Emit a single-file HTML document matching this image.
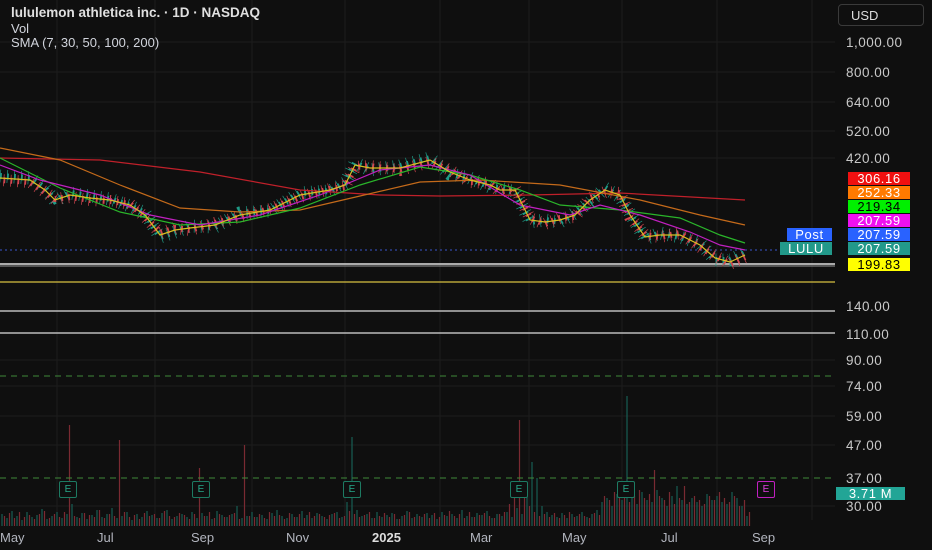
<!DOCTYPE html>
<html><head><meta charset="utf-8"><style>
body{margin:0;width:932px;height:550px;background:#0f0f0f;overflow:hidden;font-family:"Liberation Sans",sans-serif;position:relative}
.t{position:absolute;color:#d1d4dc;font-size:13px;line-height:14px}
.ax{position:absolute;left:846px;color:#c8c8c8;font-size:13.5px;letter-spacing:.5px}
.lb{position:absolute;left:848px;width:62px;height:13px;font-size:13px;line-height:13px;text-align:center;letter-spacing:.6px;color:#fff}
.m{position:absolute;top:530px;color:#b2b5be;font-size:13px}
.e{position:absolute;top:481px;width:16px;height:15px;border:1.5px solid #1d7a62;color:#26a98a;font-size:10px;text-align:center;line-height:15px;border-radius:2px;background:#0f0f0f}
</style></head><body>
<svg width="932" height="550" style="position:absolute;left:0;top:0">
<g stroke="#1c1c1c" stroke-width="1">
<line x1="57" y1="0" x2="57" y2="520"/><line x1="155" y1="0" x2="155" y2="520"/><line x1="252" y1="0" x2="252" y2="520"/><line x1="345" y1="0" x2="345" y2="520"/><line x1="440" y1="0" x2="440" y2="520"/><line x1="529" y1="0" x2="529" y2="520"/><line x1="622" y1="0" x2="622" y2="520"/><line x1="717" y1="0" x2="717" y2="520"/><line x1="812" y1="0" x2="812" y2="520"/>
<line x1="0" y1="42" x2="835" y2="42"/><line x1="0" y1="72" x2="835" y2="72"/><line x1="0" y1="102" x2="835" y2="102"/><line x1="0" y1="131" x2="835" y2="131"/><line x1="0" y1="158" x2="835" y2="158"/><line x1="0" y1="360" x2="835" y2="360"/><line x1="0" y1="386" x2="835" y2="386"/><line x1="0" y1="416" x2="835" y2="416"/><line x1="0" y1="445" x2="835" y2="445"/><line x1="0" y1="506" x2="835" y2="506"/>
</g>
<path fill="none" stroke="#175e54" stroke-width="1.2" d="M2 526v-12m5 12v-8m5 8v-15m5 15v-10m5 10v-6m5 6v-14m5 14v-9m5 9v-11m5 11v-17m5 17v-7m5 7v-10m5 10v-14m5 14v-8m5 8v-12m5 12v-22m5 22v-9m5 9v-13m5 13v-7m5 7v-11m5 11v-16m5 16v-9m5 9v-12m5 12v-18m5 18v-8m5 8v-10m5 10v-14m5 14v-6m5 6v-12m5 12v-9m5 9v-15m5 15v-11m5 11v-8m5 8v-13m5 13v-16m5 16v-7m5 7v-10m5 10v-12m5 12v-9m5 9v-14m5 14v-8m5 8v-13m5 13v-10m5 10v-7m5 7v-15m5 15v-11m5 11v-9m5 9v-12m5 12v-20m5 20v-8m5 8v-10m5 10v-14m5 14v-9m5 9v-11m5 11v-7m5 7v-13m5 13v-16m5 16v-10m5 10v-8m5 8v-12m5 12v-9m5 9v-15m5 15v-11m5 11v-8m5 8v-13m5 13v-10m5 10v-7m5 7v-12m5 12v-14m5 14v-9m5 9v-24m5 24v-89m5 89v-16m5 16v-10m5 10v-12m5 12v-8m5 8v-14m5 14v-9m5 9v-11m5 11v-13m5 13v-7m5 7v-10m5 10v-15m5 15v-8m5 8v-12m5 12v-9m5 9v-13m5 13v-11m5 11v-7m5 7v-14m5 14v-10m5 10v-12m5 12v-8m5 8v-16m5 16v-10m5 10v-9m5 9v-13m5 13v-11m5 11v-15m5 15v-8m5 8v-12m5 12v-10m5 10v-14m5 14v-9m5 9v-18m5 18v-12m5 12v-30m5 30v-64m5 64v-48m5 48v-20m5 20v-14m5 14v-11m5 11v-9m5 9v-13m5 13v-8m5 8v-12m5 12v-10m5 10v-14m5 14v-9m5 9v-12m5 12v-16m5 16v-24m5 24v-28m5 28v-20m5 20v-32m5 32v-26m5 26v-130m5 130v-30m5 30v-22m5 22v-34m5 34v-26m5 26v-24m5 24v-36m5 36v-28m5 28v-20m5 20v-30m5 30v-40m5 40v-26m5 26v-22m5 22v-28m5 28v-24m5 24v-20m5 20v-32m5 32v-26m5 26v-30m5 30v-24m5 24v-22m5 22v-34m5 34v-28m5 28v-20m5 20v-10"/>
<path fill="none" stroke="#7a2a32" stroke-width="1.2" d="M4.5 526v-10m5 10v-13m5 13v-8m5 8v-14m5 14v-9m5 9v-11m5 11v-7m5 7v-12m5 12v-15m5 15v-8m5 8v-12m5 12v-9m5 9v-14m5 14v-101m5 101v-10m5 10v-8m5 8v-13m5 13v-11m5 11v-9m5 9v-16m5 16v-8m5 8v-12m5 12v-10m5 10v-86m5 86v-14m5 14v-9m5 9v-11m5 11v-7m5 7v-13m5 13v-10m5 10v-12m5 12v-8m5 8v-15m5 15v-10m5 10v-9m5 9v-13m5 13v-11m5 11v-7m5 7v-12m5 12v-58m5 58v-10m5 10v-14m5 14v-8m5 8v-12m5 12v-9m5 9v-11m5 11v-13m5 13v-7m5 7v-81m5 81v-10m5 10v-9m5 9v-12m5 12v-8m5 8v-14m5 14v-10m5 10v-11m5 11v-7m5 7v-13m5 13v-9m5 9v-12m5 12v-8m5 8v-14m5 14v-10m5 10v-12m5 12v-9m5 9v-11m5 11v-13m5 13v-8m5 8v-10m5 10v-15m5 15v-12m5 12v-9m5 9v-11m5 11v-14m5 14v-8m5 8v-10m5 10v-13m5 13v-9m5 9v-12m5 12v-7m5 7v-11m5 11v-14m5 14v-9m5 9v-10m5 10v-12m5 12v-8m5 8v-13m5 13v-9m5 9v-11m5 11v-15m5 15v-10m5 10v-12m5 12v-8m5 8v-14m5 14v-9m5 9v-11m5 11v-13m5 13v-10m5 10v-8m5 8v-12m5 12v-14m5 14v-22m5 22v-30m5 30v-106m5 106v-40m5 40v-20m5 20v-14m5 14v-10m5 10v-12m5 12v-9m5 9v-13m5 13v-8m5 8v-11m5 11v-14m5 14v-9m5 9v-12m5 12v-10m5 10v-8m5 8v-13m5 13v-11m5 11v-30m5 30v-26m5 26v-34m5 34v-28m5 28v-38m5 38v-24m5 24v-30m5 30v-36m5 36v-28m5 28v-32m5 32v-56m5 56v-30m5 30v-26m5 26v-34m5 34v-22m5 22v-28m5 28v-40m5 40v-24m5 24v-30m5 30v-26m5 26v-22m5 22v-30m5 30v-26m5 26v-34m5 34v-28m5 28v-24m5 24v-30m5 30v-20m5 20v-26m5 26v-14"/>
<line x1="0" y1="264" x2="835" y2="264" stroke="#ddd" stroke-width="1.5"/>
<line x1="0" y1="266" x2="835" y2="266" stroke="#999" stroke-width="1"/>
<line x1="0" y1="282" x2="835" y2="282" stroke="#d8c040" stroke-width="1.3"/>
<line x1="0" y1="311" x2="835" y2="311" stroke="#ddd" stroke-width="1.2"/>
<line x1="0" y1="333" x2="835" y2="333" stroke="#ddd" stroke-width="1.2"/>
<line x1="0" y1="376" x2="835" y2="376" stroke="#3f8a3a" stroke-dasharray="6,5"/>
<line x1="0" y1="478" x2="835" y2="478" stroke="#3f8a3a" stroke-dasharray="6,5"/>
<line x1="0" y1="250" x2="780" y2="250" stroke="#3a55cc" stroke-dasharray="2,3"/>
<g fill="none">
<polyline stroke="#1f9a86" stroke-width="13" stroke-dasharray="0.7 6.3" points="0,176 30,178 45,188 55,201 70,193 90,196 110,199 130,206 145,213 160,237 175,232 190,226 215,227 240,213 270,211 300,193 330,191 345,183 355,163 370,170 400,166 430,158 450,174 470,178 490,187 500,188 515,192 530,222 545,220 560,222 575,213 590,202 605,188 620,197 630,213 645,239 660,233 680,237 700,243 715,260 730,260 745,253"/>
<polyline stroke="#1f9a86" stroke-width="6" stroke-dasharray="1.8 5.2" points="0,176 30,178 45,188 55,201 70,193 90,196 110,199 130,206 145,213 160,237 175,232 190,226 215,227 240,213 270,211 300,193 330,191 345,183 355,163 370,170 400,166 430,158 450,174 470,178 490,187 500,188 515,192 530,222 545,220 560,222 575,213 590,202 605,188 620,197 630,213 645,239 660,233 680,237 700,243 715,260 730,260 745,253"/>
<polyline stroke="#d2454f" stroke-width="12" stroke-dasharray="0.7 6.3" stroke-dashoffset="3.5" points="0,180 30,182 45,192 55,199 70,197 90,200 110,201 130,204 145,217 160,233 175,228 190,230 215,223 240,217 270,209 300,197 330,189 345,187 355,167 370,166 400,170 430,162 450,170 470,182 490,183 500,192 515,188 530,218 545,224 560,218 575,217 590,198 605,192 620,193 630,217 645,235 660,237 680,233 700,247 715,256 730,264 745,257"/>
<polyline stroke="#d2454f" stroke-width="6" stroke-dasharray="1.8 5.2" stroke-dashoffset="3.5" points="0,180 30,182 45,192 55,199 70,197 90,200 110,201 130,204 145,217 160,233 175,228 190,230 215,223 240,217 270,209 300,197 330,189 345,187 355,167 370,166 400,170 430,162 450,170 470,182 490,183 500,192 515,188 530,218 545,224 560,218 575,217 590,198 605,192 620,193 630,217 645,235 660,237 680,233 700,247 715,256 730,264 745,257"/>
</g>
<g fill="none" stroke-width="1.2">
<polyline stroke="#c0202a" points="0,158 100,160 200,172 300,190 380,195 440,196 530,195 620,193 745,200"/>
<polyline stroke="#c46a1a" points="0,148 60,160 120,185 180,208 240,212 300,210 360,196 420,182 480,180 560,185 640,200 700,215 745,225"/>
<polyline stroke="#2ab52a" points="0,158 60,188 120,212 180,225 240,222 300,208 360,185 420,167 470,175 520,190 560,205 620,210 680,218 720,235 745,243"/>
<polyline stroke="#c020c0" points="0,165 40,180 100,195 150,215 200,225 260,215 320,195 380,170 430,165 470,175 520,205 570,215 600,205 640,215 690,232 720,245 745,250"/>
<polyline stroke="#d8c020" points="0,178 30,180 45,190 55,200 70,195 90,198 110,200 130,205 145,215 160,235 175,230 190,228 215,225 240,215 270,210 300,195 330,190 345,185 355,165 370,168 400,168 430,160 450,172 470,180 490,185 500,190 515,190 530,220 545,222 560,220 575,215 590,200 605,190 620,195 630,215 645,237 660,235 680,235 700,245 715,258 730,262 745,255"/>
</g>
</svg>
<div class="t" style="left:11px;top:6px;font-weight:bold;font-size:13.5px;color:#e0e0e0">lululemon athletica inc. · 1D · NASDAQ</div>
<div class="t" style="left:11px;top:22px">Vol</div>
<div class="t" style="left:11px;top:36px">SMA (7, 30, 50, 100, 200)</div>
<div style="position:absolute;left:838px;top:4px;width:86px;height:22px;border:1px solid #3a3a3a;border-radius:4px;color:#ddd;font-size:13px;line-height:22px;box-sizing:border-box;padding-left:12px">USD</div>
<div class="ax" style="top:35px">1,000.00</div>
<div class="ax" style="top:65px">800.00</div>
<div class="ax" style="top:95px">640.00</div>
<div class="ax" style="top:124px">520.00</div>
<div class="ax" style="top:151px">420.00</div>
<div class="ax" style="top:299px">140.00</div>
<div class="ax" style="top:327px">110.00</div>
<div class="ax" style="top:353px">90.00</div>
<div class="ax" style="top:379px">74.00</div>
<div class="ax" style="top:409px">59.00</div>
<div class="ax" style="top:438px">47.00</div>
<div class="ax" style="top:471px">37.00</div>
<div class="ax" style="top:499px">30.00</div>
<div class="lb" style="top:172px;background:#f01010">306.16</div>
<div class="lb" style="top:186px;background:#ff7a00">252.33</div>
<div class="lb" style="top:200px;background:#00f000;color:#000">219.34</div>
<div class="lb" style="top:214px;background:#f010f0">207.59</div>
<div class="lb" style="top:228px;background:#2962ff">207.59</div>
<div class="lb" style="top:242px;background:#22998a">207.59</div>
<div class="lb" style="top:258px;background:#ffff00;color:#000">199.83</div>
<div class="lb" style="top:228px;left:787px;width:45px;background:#2962ff">Post</div>
<div class="lb" style="top:242px;left:780px;width:52px;background:#22998a">LULU</div>
<div class="lb" style="top:487px;left:836px;width:69px;background:#22a596">3.71 M</div>
<div class="e" style="left:59px">E</div><div class="e" style="left:192px">E</div><div class="e" style="left:343px">E</div><div class="e" style="left:510px">E</div><div class="e" style="left:617px">E</div>
<div class="e" style="left:757px;border-color:#c020c0;color:#e040e0">E</div>
<div class="m" style="left:0">May</div><div class="m" style="left:97px">Jul</div><div class="m" style="left:191px">Sep</div><div class="m" style="left:286px">Nov</div>
<div class="m" style="left:372px;font-weight:bold;color:#ddd">2025</div><div class="m" style="left:470px">Mar</div><div class="m" style="left:562px">May</div><div class="m" style="left:661px">Jul</div><div class="m" style="left:752px">Sep</div>
</body></html>
